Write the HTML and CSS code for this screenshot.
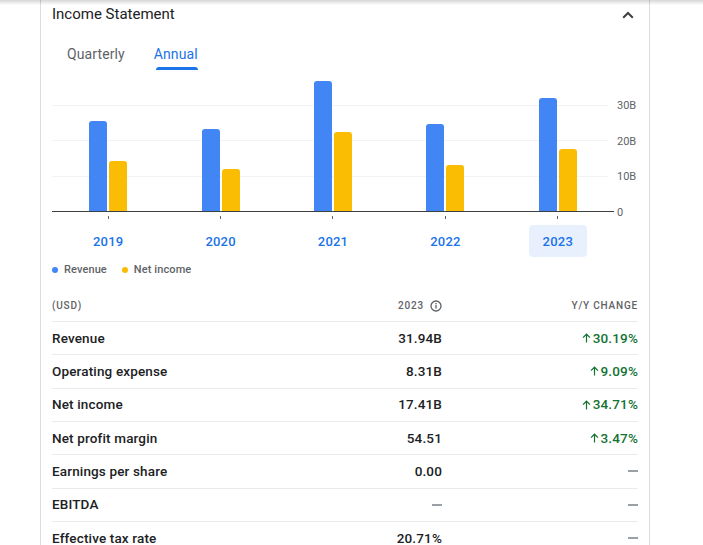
FILE: index.html
```html
<!DOCTYPE html>
<html lang="en">
<head>
<meta charset="utf-8">
<title>Income Statement</title>
<link rel="stylesheet" href="styles.css">
</head>
<body>
<div class="top-shadow"></div>
<main class="page">
  <section class="card">
    <header class="card-head">
      <h2 class="card-title">Income Statement</h2>
      <svg class="chevron" width="12" height="8" viewBox="0 0 12 8" aria-hidden="true"><polyline points="1.2,6.8 6,2 10.8,6.8" fill="none" stroke="#3c4043" stroke-width="2"/></svg>
    </header>

    <nav class="tabs">
      <span class="tab">Quarterly</span>
      <span class="tab tab-active">Annual</span>
    </nav>

    <div class="chart">
      <div class="chart-main">
        <div class="plot">
          <div class="group"><span class="bar rev" style="height:90px"></span><span class="bar net" style="height:50px"></span></div>
          <div class="group"><span class="bar rev" style="height:82px"></span><span class="bar net" style="height:42px"></span></div>
          <div class="group"><span class="bar rev" style="height:130px"></span><span class="bar net" style="height:79px"></span></div>
          <div class="group"><span class="bar rev" style="height:87px"></span><span class="bar net" style="height:46px"></span></div>
          <div class="group"><span class="bar rev" style="height:113px"></span><span class="bar net" style="height:62px"></span></div>
        </div>
        <div class="ticks">
          <span class="tick"></span><span class="tick"></span><span class="tick"></span><span class="tick"></span><span class="tick"></span>
        </div>
        <div class="years">
          <span class="year">2019</span>
          <span class="year">2020</span>
          <span class="year">2021</span>
          <span class="year">2022</span>
          <span class="year year-active">2023</span>
        </div>
      </div>
      <div class="axis">
        <span>30B</span>
        <span>20B</span>
        <span>10B</span>
        <span>0</span>
      </div>
    </div>

    <div class="legend">
      <span class="legend-item"><i class="dot dot-rev"></i>Revenue</span>
      <span class="legend-item"><i class="dot dot-net"></i>Net income</span>
    </div>

    <div class="table">
      <div class="thead">
        <span class="th">(USD)</span>
        <span class="th th-num">2023 <svg class="info" width="12" height="12" viewBox="0 0 12 12" aria-hidden="true"><circle cx="6" cy="6" r="5" fill="none" stroke="#5f6368" stroke-width="1.3"/><rect x="5.35" y="5" width="1.3" height="3.6" fill="#5f6368"/><rect x="5.35" y="3" width="1.3" height="1.3" fill="#5f6368"/></svg></span>
        <span class="th th-num">Y/Y change</span>
      </div>
      <div class="tr"><span class="td">Revenue</span><span class="td num">31.94B</span><span class="td num up"><svg class="arrow" width="9" height="10" viewBox="0 0 9 10"><path d="M4.5 9.5V1.2M1 4.6L4.5 1.2L8 4.6" fill="none" stroke="#137333" stroke-width="1.2"/></svg>30.19%</span></div>
      <div class="tr"><span class="td">Operating expense</span><span class="td num">8.31B</span><span class="td num up"><svg class="arrow" width="9" height="10" viewBox="0 0 9 10"><path d="M4.5 9.5V1.2M1 4.6L4.5 1.2L8 4.6" fill="none" stroke="#137333" stroke-width="1.2"/></svg>9.09%</span></div>
      <div class="tr"><span class="td">Net income</span><span class="td num">17.41B</span><span class="td num up"><svg class="arrow" width="9" height="10" viewBox="0 0 9 10"><path d="M4.5 9.5V1.2M1 4.6L4.5 1.2L8 4.6" fill="none" stroke="#137333" stroke-width="1.2"/></svg>34.71%</span></div>
      <div class="tr"><span class="td">Net profit margin</span><span class="td num">54.51</span><span class="td num up"><svg class="arrow" width="9" height="10" viewBox="0 0 9 10"><path d="M4.5 9.5V1.2M1 4.6L4.5 1.2L8 4.6" fill="none" stroke="#137333" stroke-width="1.2"/></svg>3.47%</span></div>
      <div class="tr"><span class="td">Earnings per share</span><span class="td num">0.00</span><span class="td num"><span class="dash" aria-label="none"></span></span></div>
      <div class="tr"><span class="td">EBITDA</span><span class="td num"><span class="dash" aria-label="none"></span></span><span class="td num"><span class="dash" aria-label="none"></span></span></div>
      <div class="tr"><span class="td">Effective tax rate</span><span class="td num">20.71%</span><span class="td num"><span class="dash" aria-label="none"></span></span></div>
    </div>
  </section>
</main>
</body>
</html>
```

FILE: styles.css
```css
* { box-sizing: border-box; }

html, body {
  margin: 0;
  padding: 0;
  background: #ffffff;
  font-family: Roboto, "Noto Sans", Arial, sans-serif;
  color: #202124;
  overflow: hidden;
}

.top-shadow {
  position: fixed;
  left: 0;
  right: 0;
  top: 0;
  height: 5px;
  background: linear-gradient(rgba(0,0,0,0.16), rgba(0,0,0,0));
  pointer-events: none;
}

.page {
  padding-left: 40px;
  width: 650px;
}

.card {
  border-left: 1px solid #dadce0;
  border-right: 1px solid #dadce0;
  padding: 0 11px 0 11px;
  min-height: 545px;
}

.card-head {
  display: flex;
  align-items: center;
  justify-content: space-between;
  height: 28px;
}

.card-title {
  margin: 0;
  font-size: 15px;
  font-weight: 400;
  line-height: 28px;
  color: #202124;
}

.chevron {
  margin-right: 4px;
  margin-top: 1px;
}

.tabs {
  display: flex;
  gap: 29px;
  padding-left: 15px;
  margin-top: 16px;
}

.tab {
  position: relative;
  font-size: 14px;
  font-weight: 400;
  letter-spacing: 0.1px;
  line-height: 20px;
  padding-bottom: 6px;
  color: #5f6368;
}

.tab-active {
  color: #1a73e8;
}

.tab-active::after {
  content: "";
  position: absolute;
  left: 2px;
  right: 0;
  bottom: 0;
  height: 3px;
  background: #1a73e8;
  border-radius: 3px 3px 0 0;
}

.chart {
  display: flex;
  align-items: flex-start;
}

.chart-main {
  width: 562px;
}

.plot {
  display: grid;
  grid-template-columns: repeat(5, 1fr);
  height: 142px;
  border-bottom: 1px solid #3c4043;
  background-image:
    linear-gradient(#f1f3f4, #f1f3f4),
    linear-gradient(#f1f3f4, #f1f3f4),
    linear-gradient(#f1f3f4, #f1f3f4);
  background-size: 99% 1px;
  background-repeat: no-repeat;
  background-position: 0 35px, 0 70px, 0 106px;
}

.group {
  display: flex;
  align-items: flex-end;
  justify-content: center;
  gap: 2px;
}

.bar {
  display: block;
  width: 18px;
  border-radius: 3px 3px 0 0;
}

.bar.rev { background: #4285f4; }
.bar.net { background: #fbbc04; }

.ticks {
  display: grid;
  grid-template-columns: repeat(5, 1fr);
  justify-items: center;
  padding-top: 4px;
  height: 13px;
}

.tick {
  width: 1px;
  height: 3px;
  background: #5f6368;
}

.years {
  display: grid;
  grid-template-columns: repeat(5, 1fr);
  justify-items: center;
}

.year {
  width: 58px;
  height: 32px;
  line-height: 34px;
  text-align: center;
  font-size: 13px;
  font-weight: 500;
  letter-spacing: 0.2px;
  color: #1a73e8;
  border-radius: 4px;
}

.year-active {
  background: #e8f0fe;
}

.axis {
  display: flex;
  flex-direction: column;
  gap: 23.5px;
  padding-top: 30px;
  padding-left: 3px;
  font-size: 11px;
  line-height: 12px;
  color: #5f6368;
}

.legend {
  display: flex;
  gap: 15px;
  margin-top: 6px;
  font-size: 11px;
  font-weight: 500;
  letter-spacing: 0.1px;
  line-height: 14px;
  color: #5f6368;
}

.legend-item {
  display: flex;
  align-items: center;
}

.dot {
  display: inline-block;
  width: 6px;
  height: 6px;
  border-radius: 50%;
  margin-right: 6px;
}

.dot-rev { background: #4285f4; }
.dot-net { background: #fbbc04; }

.table {
  width: 586px;
}

.thead,
.tr {
  display: grid;
  grid-template-columns: 1fr 120px 196px;
  align-items: center;
}

.thead {
  padding-top: 23px;
  padding-bottom: 9px;
}

.th {
  font-size: 10px;
  font-weight: 500;
  line-height: 12px;
  letter-spacing: 0.8px;
  text-transform: uppercase;
  color: #5f6368;
}

.th-num {
  display: flex;
  align-items: center;
  justify-content: flex-end;
  gap: 6px;
}

.info {
  display: block;
}

.tr {
  border-top: 1px solid #e8eaed;
  height: 33.33px;
}

.td {
  font-size: 13.5px;
  font-weight: 500;
  letter-spacing: 0.15px;
  line-height: 19px;
  color: #202124;
}

.num {
  display: flex;
  align-items: center;
  justify-content: flex-end;
  text-align: right;
}

.up {
  gap: 2px;
  color: #137333;
}

.arrow {
  display: block;
}

.dash {
  display: block;
  width: 10px;
  height: 2px;
  background: #9aa0a6;
}
```
